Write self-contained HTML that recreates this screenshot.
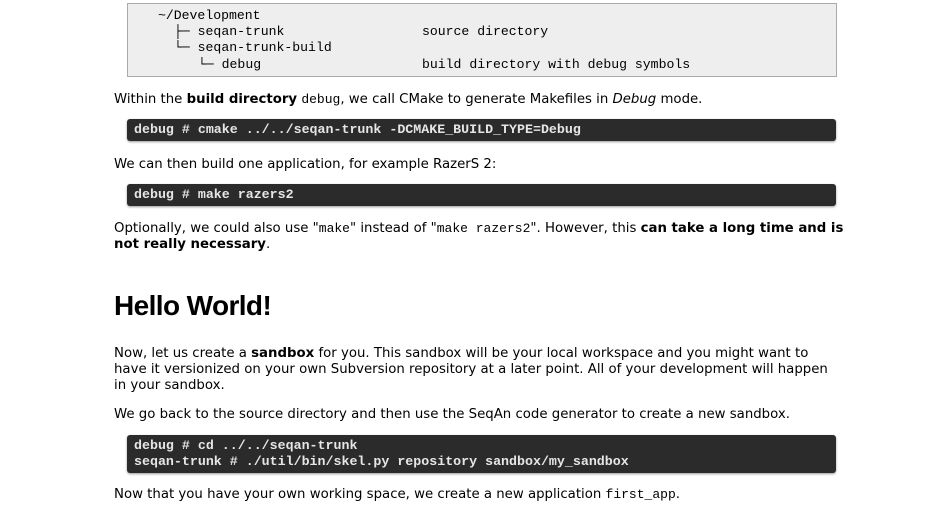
<!DOCTYPE html>
<html><head><meta charset="utf-8"><style>
body{margin:0;width:946px;height:510px;background:#fff;position:relative;overflow:hidden;font-family:"DejaVu Sans","Liberation Sans",sans-serif;font-size:13.3px;color:#000}
.l{position:absolute;left:114px;white-space:nowrap;line-height:16px}
.m{font-family:"Liberation Mono",monospace;font-size:13px}
.tree{position:absolute;left:127px;top:3px;width:708px;height:72px;background:#eeeeee;border:1px solid #aaa}
.tree div{position:absolute;white-space:nowrap;font-family:"Liberation Mono",monospace;font-size:13.15px;line-height:16px}
.dk{position:absolute;left:127px;width:709px;background:#2b2b2b;border-radius:3px;box-shadow:0 1px 2px #999;color:#e6e6e6;font-family:"Liberation Mono",monospace;font-weight:bold;font-size:13.3px;line-height:16px}
.dk div{position:absolute;left:7px;white-space:nowrap}
h1{position:absolute;left:114px;top:290px;margin:0;font-family:"Liberation Sans",sans-serif;font-size:28px;font-weight:bold;letter-spacing:-0.6px}
</style></head><body>
<div class="tree">
<div style="left:30px;top:4px">~/Development</div>
<div style="left:46px;top:20px">├─ seqan-trunk</div>
<div style="left:46px;top:36px">└─ seqan-trunk-build</div>
<div style="left:70px;top:53px">└─ debug</div>
<div style="left:294px;top:20px">source directory</div>
<div style="left:294px;top:53px">build directory with debug symbols</div>
</div>
<div class="l" style="top:92px">Within the <b>build directory</b> <span class="m">debug</span>, we call CMake to generate Makefiles in <i>Debug</i> mode.</div>
<div class="dk" style="top:119px;height:22px"><div style="top:3px">debug # cmake ../../seqan-trunk -DCMAKE_BUILD_TYPE=Debug</div></div>
<div class="l" style="top:157px">We can then build one application, for example RazerS 2:</div>
<div class="dk" style="top:184px;height:22px"><div style="top:3px">debug # make razers2</div></div>
<div class="l" style="top:221px">Optionally, we could also use "<span class="m">make</span>" instead of "<span class="m">make razers2</span>". However, this <b>can take a long time and is</b></div>
<div class="l" style="top:237px"><b>not really necessary</b>.</div>
<h1>Hello World!</h1>
<div class="l" style="top:346px">Now, let us create a <b>sandbox</b> for you. This sandbox will be your local workspace and you might want to</div>
<div class="l" style="top:362px">have it versionized on your own Subversion repository at a later point. All of your development will happen</div>
<div class="l" style="top:378px">in your sandbox.</div>
<div class="l" style="top:407px">We go back to the source directory and then use the SeqAn code generator to create a new sandbox.</div>
<div class="dk" style="top:435px;height:38px"><div style="top:3px">debug # cd ../../seqan-trunk</div><div style="top:19px">seqan-trunk # ./util/bin/skel.py repository sandbox/my_sandbox</div></div>
<div class="l" style="top:487px">Now that you have your own working space, we create a new application <span class="m">first_app</span>.</div>
</body></html>
